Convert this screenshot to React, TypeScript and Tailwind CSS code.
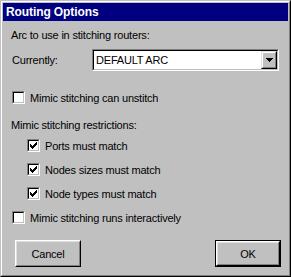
import React from "react";

const CheckMark = () => {
  const px: [number, number][] = [
    [6, 0],
    [5, 1], [6, 1],
    [0, 2], [4, 2], [5, 2], [6, 2],
    [0, 3], [1, 3], [3, 3], [4, 3], [5, 3],
    [0, 4], [1, 4], [2, 4], [3, 4], [4, 4],
    [1, 5], [2, 5], [3, 5],
    [2, 6],
  ];
  return (
    <svg width="7" height="7" viewBox="0 0 7 7" shapeRendering="crispEdges" className="block">
      {px.map(([x, y], i) => (
        <rect key={i} x={x} y={y} width="1" height="1" fill="#000" />
      ))}
    </svg>
  );
};

const Checkbox = ({ checked }: { checked?: boolean }) => (
  <div className="w-[13px] h-[13px] shrink-0 border border-t-[#808080] border-l-[#808080] border-r-white border-b-white">
    <div className="w-full h-full border border-t-black border-l-black border-r-[#c0c0c0] border-b-[#c0c0c0] bg-white flex items-center justify-center">
      {checked && <CheckMark />}
    </div>
  </div>
);

const CheckRow = ({
  label,
  checked,
  indent,
  mt,
}: {
  label: string;
  checked?: boolean;
  indent: string;
  mt: string;
}) => (
  <div className={`flex items-center h-[13px] gap-[5px] ${indent} ${mt}`}>
    <Checkbox checked={checked} />
    <span className="leading-[14px] whitespace-nowrap">{label}</span>
  </div>
);

const Button = ({ label, isDefault }: { label: string; isDefault?: boolean }) => {
  const inner = (
    <div className="w-full h-full border border-t-white border-l-white border-r-black border-b-black">
      <div className="w-full h-full border border-t-[#dfdfdf] border-l-[#dfdfdf] border-r-[#808080] border-b-[#808080] flex items-center justify-center">
        <span className="leading-[14px]">{label}</span>
      </div>
    </div>
  );
  return (
    <div className={`w-[66px] h-[27px] ${isDefault ? "border border-black" : ""}`}>{inner}</div>
  );
};

export default function App() {
  return (
    <div className="w-[291px] h-[277px] bg-[#c0c0c0] border border-t-[#c0c0c0] border-l-[#c0c0c0] border-r-black border-b-black font-['Liberation_Sans',Arial,sans-serif] text-[11px] tracking-[-0.2px] text-black">
      <div className="w-full h-full border border-t-white border-l-white border-r-[#808080] border-b-[#808080] p-px flex flex-col">
        <div className="h-[18px] bg-[#000080] flex items-center pl-[3px]">
          <span className="text-white font-bold text-[12px] tracking-[-0.1px] leading-[14px]">
            Routing Options
          </span>
        </div>
        <div className="flex flex-col pl-[8px] pr-[9px]">
          <div className="h-[14px] mt-[7px] flex items-center leading-[14px]">
            Arc to use in stitching routers:
          </div>
          <div className="h-[22px] mt-[7px] flex items-center">
            <span className="w-[81px] leading-[14px] pl-px">Currently:</span>
            <div className="w-[187px] h-[22px] border border-t-[#808080] border-l-[#808080] border-r-white border-b-white">
              <div className="w-full h-full border border-t-black border-l-black border-r-[#c0c0c0] border-b-[#c0c0c0] bg-white flex items-center">
                <span className="flex-1 pl-[2px] leading-[14px]">DEFAULT ARC</span>
                <div className="w-[16px] h-[18px] border border-t-[#dfdfdf] border-l-[#dfdfdf] border-r-black border-b-black">
                  <div className="w-full h-full bg-[#c0c0c0] border border-t-white border-l-white border-r-[#808080] border-b-[#808080] flex items-center justify-center">
                    <svg width="7" height="4" viewBox="0 0 7 4" shapeRendering="crispEdges" className="block">
                      <rect x="0" y="0" width="7" height="1" fill="#000" />
                      <rect x="1" y="1" width="5" height="1" fill="#000" />
                      <rect x="2" y="2" width="3" height="1" fill="#000" />
                      <rect x="3" y="3" width="1" height="1" fill="#000" />
                    </svg>
                  </div>
                </div>
              </div>
            </div>
          </div>
          <CheckRow label="Mimic stitching can unstitch" indent="ml-px" mt="mt-[20px]" />
          <div className="h-[14px] mt-[14px] flex items-center leading-[14px]">
            Mimic stitching restrictions:
          </div>
          <CheckRow label="Ports must match" checked indent="ml-[16px]" mt="mt-[7px]" />
          <CheckRow label="Nodes sizes must match" checked indent="ml-[16px]" mt="mt-[11px]" />
          <CheckRow label="Node types must match" checked indent="ml-[16px]" mt="mt-[11px]" />
          <CheckRow label="Mimic stitching runs interactively" indent="ml-px" mt="mt-[11px]" />
          <div className="mt-[16px] flex justify-between pl-[4px] -mr-[2px]">
            <Button label="Cancel" />
            <Button label="OK" isDefault />
          </div>
        </div>
      </div>
    </div>
  );
}
